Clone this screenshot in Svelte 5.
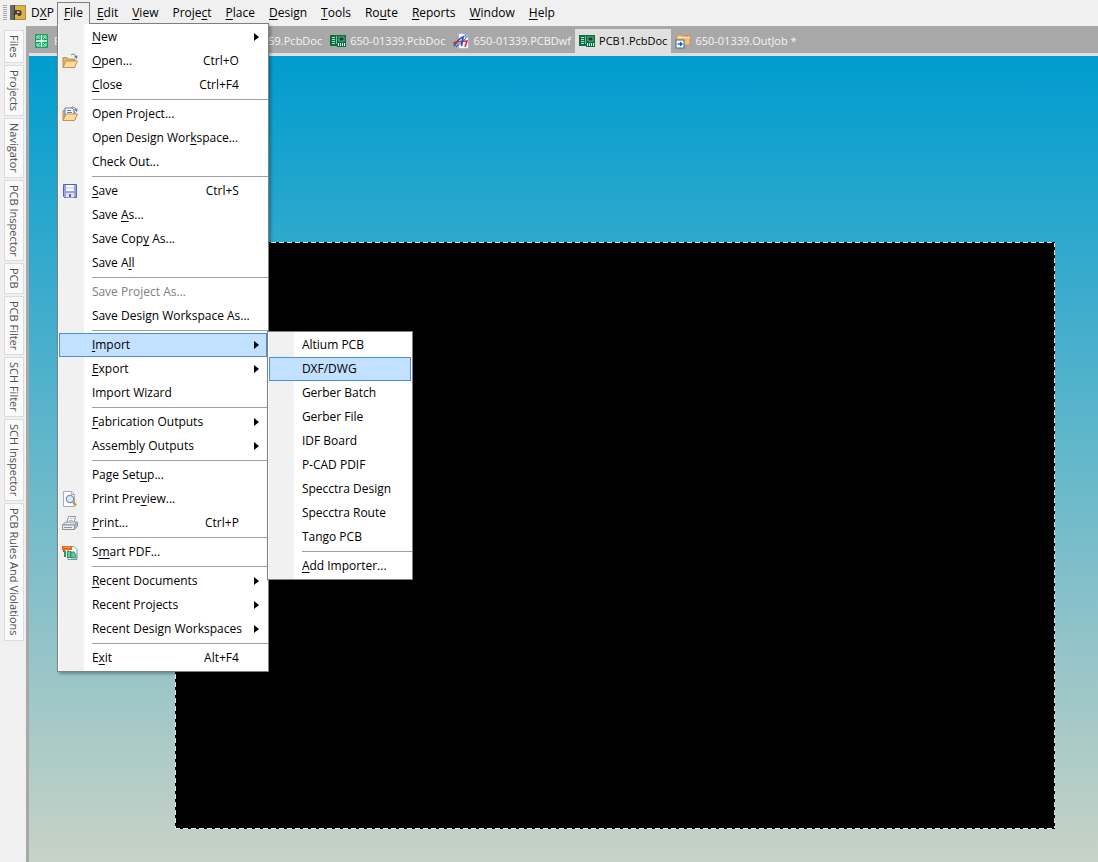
<script lang="ts">
	type Item = {
		label: string;
		keys?: string;
		icon?: string;
		sub?: boolean;
		disabled?: boolean;
		active?: boolean;
	};

	// "&" marks the mnemonic letter
	const menus = ['&Edit', '&View', 'Proje&ct', '&Place', '&Design', '&Tools', 'Ro&ute', '&Reports', '&Window', '&Help'];

	const fileMenu: Item[][] = [
		[
			{ label: '&New', sub: true },
			{ label: '&Open...', keys: 'Ctrl+O', icon: 'open' },
			{ label: '&Close', keys: 'Ctrl+F4' }
		],
		[
			{ label: 'Open Project...', icon: 'project' },
			{ label: 'Open Design Wor&kspace...' },
			{ label: 'Check Out...' }
		],
		[
			{ label: '&Save', keys: 'Ctrl+S', icon: 'save' },
			{ label: 'Save &As...' },
			{ label: 'Save Cop&y As...' },
			{ label: 'Save A&ll' }
		],
		[{ label: 'Save Project As...', disabled: true }, { label: 'Save Design Workspace As...' }],
		[
			{ label: '&Import', sub: true, active: true },
			{ label: '&Export', sub: true },
			{ label: 'Import Wizard' }
		],
		[
			{ label: '&Fabrication Outputs', sub: true },
			{ label: 'Assem&bly Outputs', sub: true }
		],
		[
			{ label: 'Page Set&up...' },
			{ label: 'Print Pre&view...', icon: 'preview' },
			{ label: '&Print...', keys: 'Ctrl+P', icon: 'print' }
		],
		[{ label: 'S&mart PDF...', icon: 'pdf' }],
		[
			{ label: '&Recent Documents', sub: true },
			{ label: 'Recent Projects', sub: true },
			{ label: 'Recent Design Workspaces', sub: true }
		],
		[{ label: 'E&xit', keys: 'Alt+F4' }]
	];

	const importMenu: Item[][] = [
		[
			{ label: 'Altium PCB' },
			{ label: 'DXF/DWG', active: true },
			{ label: 'Gerber Batch' },
			{ label: 'Gerber File' },
			{ label: 'IDF Board' },
			{ label: 'P-CAD PDIF' },
			{ label: 'Specctra Design' },
			{ label: 'Specctra Route' },
			{ label: 'Tango PCB' }
		],
		[{ label: '&Add Importer...' }]
	];

	const tabs = [
		{ label: 'Free', icon: 'sheet', wide: true },
		{ label: '650-01359.PcbDoc', icon: 'pcb' },
		{ label: '650-01339.PcbDoc', icon: 'pcb' },
		{ label: '650-01339.PCBDwf', icon: 'dwf' },
		{ label: 'PCB1.PcbDoc', icon: 'pcb', active: true },
		{ label: '650-01339.OutJob *', icon: 'outjob' }
	];

	const panels = [
		'Files',
		'Projects',
		'Navigator',
		'PCB Inspector',
		'PCB',
		'PCB Filter',
		'SCH Filter',
		'SCH Inspector',
		'PCB Rules And Violations'
	];

	function split(label: string) {
		const i = label.indexOf('&');
		if (i < 0) return [label, '', ''];
		return [label.slice(0, i), label[i + 1], label.slice(i + 2)];
	}
</script>

{#snippet text(label: string)}
	{@const [before, key, after] = split(label)}
	<span>{before}{#if key}<u>{key}</u>{/if}{after}</span>
{/snippet}

{#snippet icon(name: string)}
	<svg class="icon" width="16" height="16" viewBox="0 0 16 16" aria-hidden="true">
		{#if name === 'dxp'}
			<rect x="0.5" y="0.5" width="15" height="14" fill="#dcb445" stroke="#b08c34" />
			<path d="M0 0h4v15H0z" fill="#6a6a6a" />
			<path d="M4 0h1v15H4z" fill="#3c3c3c" />
			<path d="M5 5h5l1.500 1v3.500L10 11H8v-1.500H3V8h2z" fill="#4d4230" />
			<path d="M7 6.500h2.500v1.500H7z" fill="#e6d48c" />
		{:else if name === 'open' || name === 'project'}
			<path d="M1 14V4.500h4l1 1.500h7v8z" fill="#e3b568" stroke="#b18443" stroke-width="0.800" />
			{#if name === 'project'}
				<path d="M3 2h7l2 2v7H3z" fill="#f5f9ff" stroke="#5f7fac" />
				<path d="M5 4.500h4M5 6.500h5" stroke="#5f7fac" />
			{/if}
			<path d="M1 14.500 4 8h11.500l-3 6.500z" fill="#fbdc9e" stroke="#b18443" stroke-width="0.800" />
			<path d="M9 2c2-1.500 4-1 5 1.500" fill="none" stroke="#5d7591" />
			<path d="m12 3.500 3.500-1-.5 3.500z" fill="#5d7591" />
		{:else if name === 'save'}
			<path d="M1.500 1.500h13v13h-12l-1-1z" fill="#99a2dc" stroke="#5a62a8" />
			<rect x="4" y="2" width="8" height="6" fill="#f4f6ff" />
			<path d="M4 5h8" stroke="#c6cbe8" />
			<rect x="4" y="10" width="8" height="4.500" fill="#dfe3f6" />
			<rect x="7" y="11" width="2" height="3" fill="#5a62a8" />
		{:else if name === 'preview'}
			<path d="M1.500 0.500h8l3 3v12h-11z" fill="#fff" stroke="#a3acc0" />
			<path d="M9.500 0.500v3h3" fill="none" stroke="#a3acc0" />
			<circle cx="8" cy="8" r="3.700" fill="#d6ecff" stroke="#7f90b0" stroke-width="1.300" />
			<path d="m11 11 3 3.500" stroke="#c39050" stroke-width="2.400" />
		{:else if name === 'print'}
			<path d="m4.500 8 2-6.500h7L12 8z" fill="#fff" stroke="#8d93a2" />
			<path d="M7.500 3.500h4M7 5.500h4" stroke="#b6bbc8" />
			<path d="m0.500 10 3-3h12l-3 3z" fill="#e4e6ec" stroke="#8d93a2" />
			<path d="M0.500 10h12v4.500H0.500z" fill="#eceef4" stroke="#8d93a2" />
			<path d="m12.500 10 3-3v4l-3 3.500z" fill="#b4b9c8" stroke="#8d93a2" />
			<path d="M2 12.500h8" stroke="#8d93a2" />
		{:else if name === 'pdf'}
			<path d="M6 2.500h6l3 3v10H6z" fill="#fff" stroke="#7899a6" />
			<path d="M2 7h2v6H2z" fill="#2c9a66" />
			<path d="M5 7h4v7H5z" fill="#2c9a66" />
			<path d="M9 8h3l2 3v3H9z" fill="#68c492" stroke="#2c9a66" />
			<path d="M7 8v5" stroke="#c8ead4" />
			<path d="M0 2h10v4H0z" fill="#ec6a1c" />
			<path d="M1 6h2v2H1z" fill="#c34e14" />
			<path d="M2 3.500h6" stroke="#f39a55" />
		{:else if name === 'sheet'}
			<rect x="1" y="1" width="13" height="14" rx="1" fill="#12a562" />
			<path d="M7.500 2v12M2 8h11" stroke="#fff" stroke-width="1.400" />
			<path d="M3 6V3h3M9 3h3v3M12 10v3H9M6 13H3v-3" fill="none" stroke="#c8f0dc" />
			<path d="m4 4 2 2M11 4 9 6M4 12l2-2M11 12l-2-2" stroke="#c8f0dc" />
		{:else if name === 'pcb'}
			<path d="M0 2h16v12H7v-1H0z" fill="#0a7044" />
			<path d="M2 4.500h3M2 6.500h3M2 8.500h3M2 10.500h3" stroke="#b6e0c8" />
			<path d="M6.500 3v8" stroke="#7fc4a0" />
			<rect x="9" y="4" width="5" height="4" fill="#04482c" stroke="#8ccfac" stroke-width="0.700" />
			<path d="M8.500 10v3M10.500 10v3M12.500 10v3M14.500 10v3" stroke="#e8f5ec" />
		{:else if name === 'dwf'}
			<path d="M5.500 0.500h7l3 3v12h-10z" fill="#f7f9ff" stroke="#a9b6d4" />
			<path d="M12 0.500v3.500h3.500" fill="#9cb4e4" stroke="#6c88c4" />
			<path d="M1 13C4 8 7 5 10 4L8.500 13" fill="none" stroke="#2b52b8" stroke-width="1.800" />
			<path d="M0 10c5-2 9-2 14-2l-2 6" fill="none" stroke="#d3303c" stroke-width="1.600" />
			<path d="m3 14 10-9" stroke="#2b52b8" />
		{:else if name === 'outjob'}
			<path d="M2 2h5l1 1h7v9H2z" fill="#f3c078" stroke="#c98f46" stroke-width="0.800" />
			<path d="M2 4.500h13" stroke="#fbe0b4" />
			<rect x="1" y="7" width="8" height="8" fill="#fff" stroke="#2f6cb8" />
			<path d="M2.500 11H6" stroke="#1d56a8" stroke-width="1.400" />
			<path d="m5 8.500 3 2.500-3 2.500z" fill="#1d56a8" />
		{/if}
	</svg>
{/snippet}

{#snippet menuList(groups: Item[][])}
	{#each groups as group, g}
		{#if g > 0}<div class="separator" role="separator"></div>{/if}
		{#each group as item}
			<button class="item" class:active={item.active} role="menuitem" disabled={item.disabled}>
				<span class="slot">
					{#if item.icon}{@render icon(item.icon)}{/if}
				</span>
				{@render text(item.label)}
				{#if item.keys}<span class="keys">{item.keys}</span>{/if}
				{#if item.sub}
					<svg class="arrow" width="5" height="8" viewBox="0 0 5 8" aria-hidden="true"><path d="M0 0l5 4-5 4z" /></svg>
				{/if}
			</button>
		{/each}
	{/each}
{/snippet}

<div class="app">
	<nav class="menubar">
		<span class="grip"></span>
		<button class="dxp">{@render icon('dxp')}{@render text('D&XP')}</button>
		<div class="file">
			<button class="open">{@render text('&File')}</button>
			<div class="menu" role="menu">
				{@render menuList(fileMenu)}
				<div class="menu submenu" role="menu">
					{@render menuList(importMenu)}
				</div>
			</div>
		</div>
		{#each menus as label}
			<button>{@render text(label)}</button>
		{/each}
	</nav>

	<div class="body">
		<aside class="panels">
			{#each panels as panel}
				<button>{panel}</button>
			{/each}
		</aside>
		<main>
			<div class="tabs">
				{#each tabs as tab}
					<button class:current={tab.active} class:wide={tab.wide}>
						{@render icon(tab.icon)}<span>{tab.label}</span>
					</button>
				{/each}
			</div>
			<div class="canvas">
				<div class="board"></div>
			</div>
		</main>
	</div>
</div>

<style>
	:global(body) {
		margin: 0;
	}

	.app {
		display: flex;
		flex-direction: column;
		min-height: 100vh;
		background: #f0f0f0;
		color: #000;
		font: 12px/16px 'Open Sans', 'Noto Sans', sans-serif;
	}

	button {
		margin: 0;
		padding: 0;
		border: 0;
		background: none;
		color: inherit;
		font: inherit;
		text-align: left;
		white-space: nowrap;
	}

	u {
		text-decoration-thickness: 1px;
		text-decoration-skip-ink: none;
		text-underline-offset: 2px;
	}

	.icon {
		display: block;
		flex: none;
	}

	.menubar {
		display: flex;
		height: 26px;
		box-sizing: border-box;
		padding-top: 2px;
	}

	.menubar > button {
		padding: 0 7px;
		height: 22px;
	}

	.grip {
		width: 4px;
		height: 16px;
		margin: 3px 3px 0;
		background: repeating-linear-gradient(#a8a8a8 0 1px, #f0f0f0 1px 2px);
	}

	.menubar > .dxp {
		display: flex;
		align-items: center;
		gap: 5px;
		padding: 0 3px 0 0;
	}

	.file {
		position: relative;
	}

	.file > .open {
		position: relative;
		z-index: 3;
		height: 22px;
		padding: 0 6px 1px;
		border: 1px solid #808080;
		border-bottom: 0;
		background: #f0f0f0;
	}

	.menu {
		position: absolute;
		z-index: 2;
		top: 21px;
		left: 0;
		width: 210px;
		padding: 1px 0;
		border: 1px solid #808080;
		background: linear-gradient(to right, #fff 1px, #f1f1f1 1px 26px, #fff 26px);
		box-shadow: 2px 2px 3px rgba(0, 0, 0, 0.3);
	}

	.submenu {
		top: 307px;
		left: 209px;
		width: 144px;
	}

	.separator {
		height: 1px;
		margin: 2px 0 2px 34px;
		background: #a0a0a0;
	}

	.item {
		display: flex;
		align-items: center;
		box-sizing: border-box;
		width: calc(100% - 2px);
		height: 24px;
		margin: 0 1px;
		padding-right: 6px;
		border: 1px solid transparent;
	}

	.item:disabled {
		color: #808080;
	}

	.item.active {
		border-color: #4a90d9;
		background: #c2e0ff;
	}

	.slot {
		flex: none;
		width: 30px;
		padding-left: 2px;
	}

	.keys {
		margin-left: auto;
		padding-right: 21px;
	}

	.arrow {
		margin-left: auto;
		margin-right: 1px;
	}

	.body {
		display: flex;
		flex: 1;
	}

	.panels {
		display: flex;
		flex-direction: column;
		align-items: flex-end;
		gap: 2px;
		width: 24px;
		padding: 4px 2px 0 0;
		border-right: 3px solid #a8a8a8;
	}

	.panels button {
		width: 20px;
		box-sizing: border-box;
		padding: 4px 0;
		border: 1px solid #dcdcdc;
		background: #fafafa;
		color: #505050;
		font-size: 11px;
		line-height: 18px;
		writing-mode: vertical-rl;
	}

	main {
		display: flex;
		flex: 1;
		flex-direction: column;
		min-width: 0;
	}

	.tabs {
		display: flex;
		height: 24px;
		padding: 3px 0 0 1px;
		border-bottom: 3px solid #e0e0e0;
		background: #a8a8a8;
		color: #f4f4f4;
		font-size: 11px;
	}

	.tabs button {
		display: flex;
		align-items: center;
		gap: 4px;
		padding: 0 4px;
	}

	.tabs .current {
		background: #e0e0e0;
		color: #000;
	}

	.tabs .wide {
		width: 173px;
	}

	.canvas {
		display: flex;
		flex: 1;
		padding: 186px 43px 33px 146px;
		background: linear-gradient(#009ccf, #c8d2c6);
	}

	/* dashed selection outline, one strip per edge */
	.board {
		--across: repeating-linear-gradient(to right, #dcebea 0 5px, #000 5px 8px);
		--down: repeating-linear-gradient(#dcebea 0 5px, #000 5px 8px);
		flex: 1;
		background:
			var(--across) top / 100% 1px no-repeat,
			var(--across) bottom / 100% 1px no-repeat,
			var(--down) left / 1px 100% no-repeat,
			var(--down) right / 1px 100% no-repeat,
			#000;
	}
</style>
